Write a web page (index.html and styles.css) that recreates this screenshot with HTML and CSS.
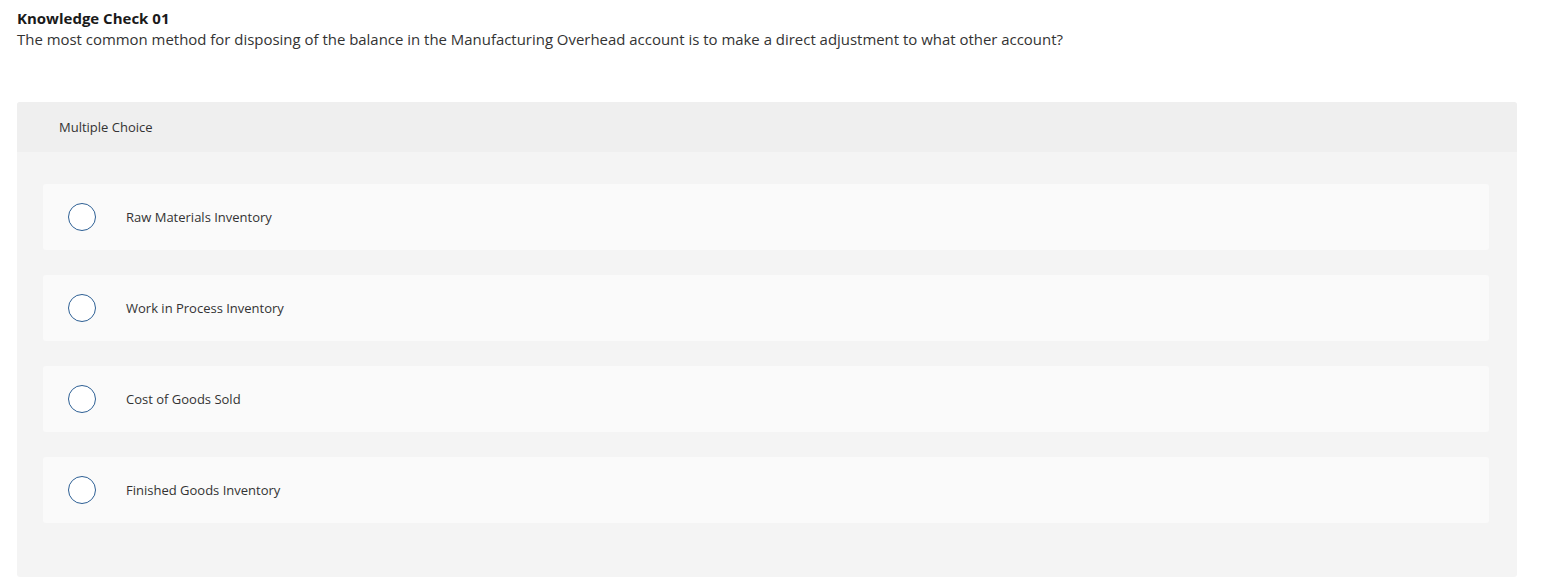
FILE: index.html
```html
<!DOCTYPE html>
<html lang="en">
<head>
<meta charset="utf-8">
<title>Knowledge Check 01</title>
<link rel="stylesheet" href="styles.css">
</head>
<body>
<div class="page">
  <div class="intro">
    <h1 class="title">Knowledge Check 01</h1>
    <p class="question">The most common method for disposing of the balance in the Manufacturing Overhead account is to make a direct adjustment to what other account?</p>
  </div>
  <section class="card">
    <div class="card-head">Multiple Choice</div>
    <div class="card-body">
      <label class="option"><span class="radio"></span><span class="label">Raw Materials Inventory</span></label>
      <label class="option"><span class="radio"></span><span class="label">Work in Process Inventory</span></label>
      <label class="option"><span class="radio"></span><span class="label">Cost of Goods Sold</span></label>
      <label class="option"><span class="radio"></span><span class="label">Finished Goods Inventory</span></label>
    </div>
  </section>
</div>
</body>
</html>
```
FILE: styles.css
```css
html, body {
  margin: 0;
  padding: 0;
  background: #ffffff;
}
body {
  font-family: "Open Sans", "Liberation Sans", sans-serif;
  color: #333333;
}
.page {
  padding: 9px 24px 0 17px;
}
.intro {
  height: 93px;
}
.title {
  margin: 0;
  font-size: 15px;
  font-weight: 700;
  line-height: 18px;
  color: #1a1a1a;
}
.question {
  margin: 2px 0 0;
  font-size: 14.95px;
  line-height: 20px;
  color: #333;
}
.card {
  width: 1500px;
  background: #f4f4f4;
  border-radius: 3px;
  overflow: hidden;
}
.card-head {
  height: 50px;
  background: #efefef;
  display: flex;
  align-items: center;
  padding-left: 42px;
  font-size: 13px;
  color: #333;
}
.card-body {
  padding: 32px 28px 54px 26px;
  display: flex;
  flex-direction: column;
  gap: 25px;
}
.option {
  height: 66px;
  background: #fafafa;
  border-radius: 3px;
  display: flex;
  align-items: center;
  padding-left: 25px;
}
.radio {
  width: 26px;
  height: 26px;
  border: 1.4px solid #2d5f94;
  border-radius: 50%;
  background: #fff;
  flex: none;
}
.label {
  margin-left: 30px;
  font-size: 13px;
  color: #333;
}
```
